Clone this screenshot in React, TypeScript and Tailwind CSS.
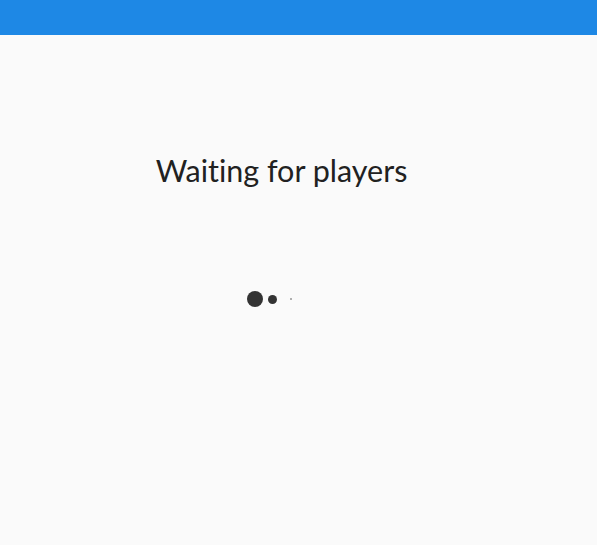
import React from 'react';

export default function App() {
  return (
    <div className="min-h-[545px] bg-[#fafafa] font-['Lato',sans-serif]">
      <header className="h-[35px] bg-[#1e88e5]" />
      <main className="w-[563px] flex flex-col items-center">
        <h1 className="mt-[115px] text-[30.5px] leading-[40px] text-[#212121] font-normal [font-variant-ligatures:none]">
          Waiting for players
        </h1>
        <div className="mt-[101px] w-full flex items-center pl-[247px] gap-[5px]">
          <span className="w-[16px] h-[16px] rounded-full bg-[#333333]" />
          <span className="w-[9px] h-[9px] rounded-full bg-[#333333]" />
          <span className="ml-[8px] w-[2px] h-[2px] rounded-full bg-[#333333] opacity-50" />
        </div>
      </main>
    </div>
  );
}
